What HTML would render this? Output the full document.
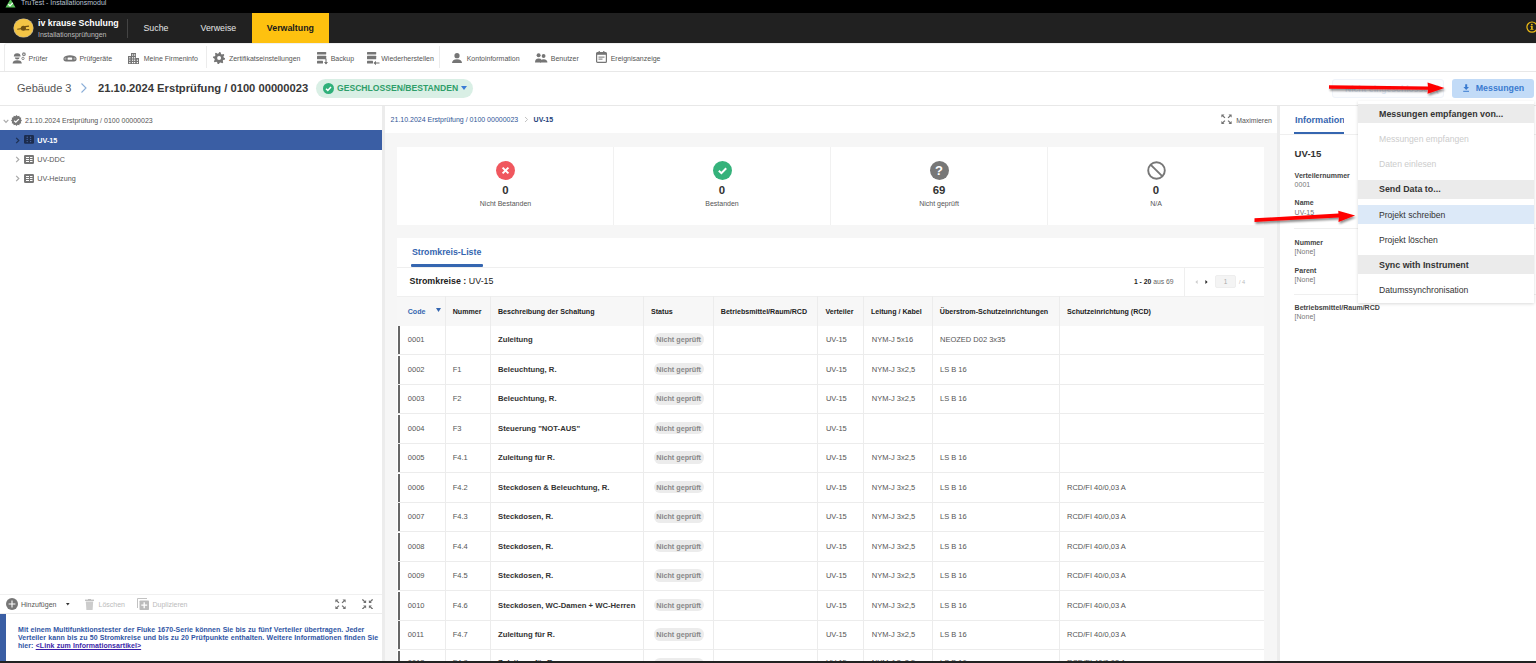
<!DOCTYPE html>
<html><head><meta charset="utf-8">
<style>
*{box-sizing:border-box;margin:0;padding:0}
html,body{width:1536px;height:663px;overflow:hidden;background:#fff}
body{position:relative;font-family:"Liberation Sans",sans-serif;color:#333}
.a{position:absolute}
.t{position:absolute;white-space:nowrap;line-height:1}
.b{font-weight:bold}
</style></head><body>
<div class="a" style="left:0px;top:0px;width:1536px;height:13px;background:#000;"></div>
<svg class="a" style="left:5px;top:0px" width="11" height="9" viewBox="0 0 11 9"><path d="M5.5 -1 L10.5 7.5 L0.5 7.5 Z" fill="#5cc25c"/><path d="M3.3 4.2 L5 5.8 L7.8 2.8" stroke="#fff" stroke-width="1.2" fill="none"/></svg>
<div class="t" style="left:21.00px;top:-0.63px;font-size:7px;color:#b8c2d2;">TruTest - Installationsmodul</div>
<div class="a" style="left:0px;top:13px;width:1536px;height:30px;background:#212121;"></div>
<div class="a" style="left:14.1px;top:18.9px;width:18.5px;height:18.5px;background:#f3c445;border-radius:50%;box-shadow:0 0 0 0.6px rgba(255,240,200,0.7)"></div>
<svg class="a" style="left:16px;top:22px" width="15" height="12" viewBox="0 0 15 12"><path d="M1.2 7.2 L5.5 6.6" stroke="#7a5a16" stroke-width="1.1"/><ellipse cx="7.4" cy="6.3" rx="2.6" ry="2.5" fill="#6e4f12"/><path d="M9 4.6 L13 4.1 M9.3 7.8 L13.2 7.6" stroke="#6e4f12" stroke-width="1.1"/></svg>
<div class="t" style="left:38.00px;top:18.55px;font-size:8.8px;color:#fff;font-weight:bold;">iv krause Schulung</div>
<div class="t" style="left:38.00px;top:30.97px;font-size:7px;color:#bbb;">Installationsprüfungen</div>
<div class="a" style="left:127px;top:18.5px;width:1px;height:19px;background:#444;"></div>
<div class="t" style="left:143.50px;top:23.65px;font-size:8.8px;color:#e6e6e6;">Suche</div>
<div class="t" style="left:200.50px;top:23.65px;font-size:8.8px;color:#e6e6e6;">Verweise</div>
<div class="a" style="left:252px;top:13px;width:77px;height:30px;background:#fec10f;"></div>
<div class="t" style="left:266.80px;top:23.81px;font-size:8.85px;color:#1a1a1a;font-weight:bold;">Verwaltung</div>
<svg class="a" style="left:1526px;top:21px" width="12" height="12" viewBox="0 0 12 12"><circle cx="6" cy="6.1" r="5.1" fill="none" stroke="#f0bd14" stroke-width="1.2"/><circle cx="5.8" cy="3.6" r="0.95" fill="#f0bd14"/><path d="M4.4 5 H6.7 V7.9 H7.5 V8.8 H4.3 V7.9 H5.1 V5.8 H4.4Z" fill="#f0bd14"/></svg>
<div class="a" style="left:4.3px;top:42.6px;width:1532px;height:29.5px;background:transparent;border-left:1px solid #ececec;border-top:1px solid #f0f0f0;border-top-left-radius:3px"></div>
<div class="a" style="left:0px;top:71px;width:1536px;height:1px;background:#e8e8e8;"></div>
<svg class="a" style="left:11.7px;top:52px" width="15" height="12" viewBox="0 0 15 12"><path d="M1.8 4.6 Q1.8 1.2 5.2 1.2 Q8.6 1.2 8.6 4.6 Z" fill="#757575"/><path d="M2.8 5.6 H7.6 Q7.4 7.6 5.2 7.6 Q3 7.6 2.8 5.6Z" fill="#757575"/><path d="M0.6 11.6 Q0.6 8.2 5.2 8.2 Q9.8 8.2 9.8 11.6 Z" fill="#757575"/><path d="M14.00 2.20 L13.38 2.81 L13.38 3.68 L12.51 3.68 L11.90 4.30 L11.29 3.68 L10.42 3.68 L10.42 2.81 L9.80 2.20 L10.42 1.59 L10.42 0.72 L11.29 0.72 L11.90 0.10 L12.51 0.72 L13.38 0.72 L13.38 1.59Z" fill="#757575"/><circle cx="11.9" cy="2.2" r="0.7" fill="#fff"/><circle cx="11" cy="6.4" r="1.2" fill="none" stroke="#757575" stroke-width="0.8"/></svg>
<div class="t" style="left:28.60px;top:55.47px;font-size:7.0px;color:#555;">Prüfer</div>
<svg class="a" style="left:62.6px;top:55px" width="14" height="7" viewBox="0 0 14 7"><path d="M2.8 0.9 Q7 -0.2 11.2 0.9 Q13.6 1.4 13.6 3.7 Q13.6 6.3 11 6.5 H3 Q0.4 6.3 0.4 3.7 Q0.4 1.4 2.8 0.9Z" fill="#757575"/><rect x="4.6" y="2.5" width="4.6" height="2.3" rx="0.6" fill="#fff"/><circle cx="2.4" cy="3.7" r="1.1" fill="#aaa"/><circle cx="11.6" cy="3.7" r="1.1" fill="#aaa"/></svg>
<div class="t" style="left:79.40px;top:55.47px;font-size:7.0px;color:#555;">Prüfgeräte</div>
<svg class="a" style="left:128px;top:52.5px" width="11" height="11" viewBox="0 0 11 11"><path d="M0 11 V3 H3 V0 H8 V5 H11 V11 Z" fill="#757575"/><g fill="#fff"><rect x="1.2" y="4.2" width="1.2" height="1.2"/><rect x="1.2" y="6.6" width="1.2" height="1.2"/><rect x="1.2" y="9" width="1.2" height="1.2"/><rect x="4" y="1.4" width="1.2" height="1.2"/><rect x="6" y="1.4" width="1.2" height="1.2"/><rect x="4" y="4.2" width="1.2" height="1.2"/><rect x="6" y="4.2" width="1.2" height="1.2"/><rect x="4" y="6.6" width="1.2" height="1.2"/><rect x="6" y="6.6" width="1.2" height="1.2"/><rect x="4" y="9" width="1.2" height="1.2"/><rect x="6" y="9" width="1.2" height="1.2"/><rect x="8.8" y="6.6" width="1.2" height="1.2"/><rect x="8.8" y="9" width="1.2" height="1.2"/></g></svg>
<div class="t" style="left:143.75px;top:55.47px;font-size:7.0px;color:#555;">Meine Firmeninfo</div>
<div class="a" style="left:206px;top:46px;width:1px;height:22px;background:#ececec;"></div>
<svg class="a" style="left:212.8px;top:51.9px" width="12.2" height="12.2" viewBox="0 0 12.2 12.2"><path d="M6.40 0.01 L7.58 0.18 L8.07 1.94 L8.84 2.41 L10.62 2.00 L11.33 2.96 L10.43 4.55 L10.65 5.43 L12.19 6.40 L12.02 7.58 L10.26 8.07 L9.79 8.84 L10.20 10.62 L9.24 11.33 L7.65 10.43 L6.77 10.65 L5.80 12.19 L4.62 12.02 L4.13 10.26 L3.36 9.79 L1.58 10.20 L0.87 9.24 L1.77 7.65 L1.55 6.77 L0.01 5.80 L0.18 4.62 L1.94 4.13 L2.41 3.36 L2.00 1.58 L2.96 0.87 L4.55 1.77 L5.43 1.55Z" fill="#757575"/><circle cx="6.1" cy="6.1" r="2" fill="#fff"/></svg>
<div class="t" style="left:228.90px;top:55.47px;font-size:7.0px;color:#555;">Zertifikatseinstellungen</div>
<svg class="a" style="left:316.8px;top:52.2px" width="12" height="13" viewBox="0 0 12 13"><rect x="0" y="0" width="9.2" height="2.6" rx="0.5" fill="#757575"/><rect x="0" y="3.8" width="9.2" height="3.5" rx="0.5" fill="#757575"/><rect x="0" y="8.8" width="6" height="2.6" rx="0.5" fill="#757575"/><path d="M9 6.8 V12" stroke="#757575" stroke-width="1.1"/><path d="M7 10 L9 12.4 L11 10Z" fill="#757575"/></svg>
<div class="t" style="left:330.70px;top:55.47px;font-size:7.0px;color:#555;">Backup</div>
<svg class="a" style="left:367px;top:52.2px" width="13" height="13" viewBox="0 0 13 13"><rect x="0" y="0" width="9.2" height="2.6" rx="0.5" fill="#757575"/><rect x="0" y="3.8" width="9.2" height="3.5" rx="0.5" fill="#757575"/><rect x="0" y="8.8" width="6" height="2.6" rx="0.5" fill="#757575"/><path d="M7.5 11 H12.5" stroke="#757575" stroke-width="1.1"/><path d="M9 8.8 L6.5 11 L9 13.2Z" fill="#757575"/></svg>
<div class="t" style="left:381.25px;top:55.47px;font-size:7.0px;color:#555;">Wiederherstellen</div>
<div class="a" style="left:439px;top:46px;width:1px;height:22px;background:#ececec;"></div>
<svg class="a" style="left:451.9px;top:52.5px" width="10" height="10.5" viewBox="0 0 10 10.5"><circle cx="5" cy="2.7" r="2.6" fill="#757575"/><path d="M0 10.3 Q0 6.2 5 6.2 Q10 6.2 10 10.3Z" fill="#757575"/></svg>
<div class="t" style="left:466.70px;top:55.47px;font-size:7.0px;color:#555;">Kontoinformation</div>
<svg class="a" style="left:535.2px;top:53px" width="12.5" height="10" viewBox="0 0 12.5 10"><circle cx="3.6" cy="2.2" r="2" fill="#757575"/><circle cx="8.6" cy="3" r="1.9" fill="#757575"/><path d="M0 9.6 Q0 5.6 3.6 5.6 Q6 5.6 6.6 7 L6 9.6Z" fill="#757575"/><path d="M5 9.6 Q5 6.4 8.6 6.2 Q12.4 6.4 12.4 9.6Z" fill="#757575"/></svg>
<div class="t" style="left:550.80px;top:55.47px;font-size:7.0px;color:#555;">Benutzer</div>
<svg class="a" style="left:596px;top:51.3px" width="11" height="12" viewBox="0 0 11 12"><rect x="0.6" y="1.6" width="9.8" height="9.8" rx="1" fill="none" stroke="#757575" stroke-width="1.2"/><rect x="0.6" y="1.6" width="9.8" height="2.2" fill="#757575"/><rect x="2.6" y="0" width="1.2" height="2.5" fill="#757575"/><rect x="7.2" y="0" width="1.2" height="2.5" fill="#757575"/><rect x="2.5" y="5.6" width="6" height="1" fill="#757575"/><rect x="2.5" y="7.6" width="4" height="1" fill="#757575"/></svg>
<div class="t" style="left:610.70px;top:55.47px;font-size:7.0px;color:#555;">Ereignisanzeige</div>
<div class="t" style="left:17.00px;top:82.89px;font-size:11px;color:#555;">Gebäude 3</div>
<svg class="a" style="left:80px;top:82px" width="8" height="12" viewBox="0 0 8 12"><path d="M1.5 1.5 L6 6 L1.5 10.5" stroke="#8aaed8" stroke-width="1.1" fill="none"/></svg>
<div class="t" style="left:98.00px;top:83.22px;font-size:11.2px;color:#383838;font-weight:bold;">21.10.2024 Erstprüfung / 0100 00000023</div>
<div class="a" style="left:316px;top:79px;width:157px;height:19px;background:#d9efe5;border-radius:10px"></div>
<div class="a" style="left:323px;top:82.5px;width:11px;height:11px;background:#2fb07a;border-radius:50%"></div>
<svg class="a" style="left:323px;top:82.5px" width="11" height="11" viewBox="0 0 11 11"><path d="M3 5.8 L4.8 7.4 L8 4" stroke="#fff" stroke-width="1.5" fill="none"/></svg>
<div class="t" style="left:337.00px;top:83.62px;font-size:8.6px;color:#2e9e6a;font-weight:bold;">GESCHLOSSEN/BESTANDEN</div>
<svg class="a" style="left:461px;top:86px" width="6" height="4" viewBox="0 0 6 4"><path d="M0 0 L6 0 L3 4 Z" fill="#3a7bd5"/></svg>
<div class="a" style="left:0px;top:105px;width:1536px;height:1px;background:#e8e8e8;"></div>
<div class="a" style="left:382px;top:106px;width:3px;height:555px;background:#ececec;"></div>
<div class="a" style="left:1277px;top:106px;width:3px;height:555px;background:#ececec;"></div>
<svg class="a" style="left:2.5px;top:118.8px" width="6" height="5" viewBox="0 0 6 5"><path d="M0.7 0.9 L3 3.3 L5.3 0.9" stroke="#aaa" stroke-width="1.2" fill="none"/></svg>
<svg class="a" style="left:11px;top:114.8px" width="11" height="11" viewBox="0 0 11 11"><path d="M11.00 5.50 L9.85 6.66 L10.26 8.25 L8.68 8.68 L8.25 10.26 L6.66 9.85 L5.50 11.00 L4.34 9.85 L2.75 10.26 L2.32 8.68 L0.74 8.25 L1.15 6.66 L0.00 5.50 L1.15 4.34 L0.74 2.75 L2.32 2.32 L2.75 0.74 L4.34 1.15 L5.50 0.00 L6.66 1.15 L8.25 0.74 L8.68 2.32 L10.26 2.75 L9.85 4.34Z" fill="#777"/><path d="M3.2 5.7 L4.8 7.2 L7.8 4.1" stroke="#fff" stroke-width="1.3" fill="none"/></svg>
<div class="t" style="left:25.00px;top:117.17px;font-size:7px;color:#555;">21.10.2024 Erstprüfung / 0100 00000023</div>
<div class="a" style="left:0px;top:130.3px;width:382px;height:19.5px;background:#3a5ea4;"></div>
<svg class="a" style="left:15px;top:136.5px" width="5" height="7" viewBox="0 0 5 7"><path d="M1.2 0.9 L3.8 3.5 L1.2 6.1" stroke="#1f3152" stroke-width="1.2" fill="none"/></svg>
<svg class="a" style="left:23.7px;top:135.4px" width="10" height="9" viewBox="0 0 10 9"><rect x="0" y="0" width="10" height="8.8" rx="1.2" fill="#1c2c4e"/><g fill="#4a68a6"><circle cx="3.2" cy="2.2" r="0.7"/><circle cx="3.2" cy="4.4" r="0.7"/><circle cx="3.2" cy="6.6" r="0.7"/><circle cx="6.6" cy="2.2" r="0.7"/><circle cx="6.6" cy="4.4" r="0.7"/><circle cx="6.6" cy="6.6" r="0.7"/></g></svg>
<div class="t" style="left:37.30px;top:136.71px;font-size:7.2px;color:#fff;font-weight:bold;">UV-15</div>
<svg class="a" style="left:15px;top:155.8px" width="5" height="7" viewBox="0 0 5 7"><path d="M1.2 0.9 L3.8 3.5 L1.2 6.1" stroke="#aaa" stroke-width="1.2" fill="none"/></svg>
<svg class="a" style="left:24px;top:155px" width="10" height="9" viewBox="0 0 10 9"><rect x="0" y="0" width="10" height="9" rx="1.2" fill="#777"/><g fill="#fff"><rect x="2" y="2" width="3" height="1"/><rect x="6" y="2" width="2.5" height="1"/><rect x="2" y="4" width="3" height="1"/><rect x="6" y="4" width="2.5" height="1"/><rect x="2" y="6" width="3" height="1"/><rect x="6" y="6" width="2.5" height="1"/></g></svg>
<div class="t" style="left:37.30px;top:155.71px;font-size:7.2px;color:#555;">UV-DDC</div>
<svg class="a" style="left:15px;top:175.2px" width="5" height="7" viewBox="0 0 5 7"><path d="M1.2 0.9 L3.8 3.5 L1.2 6.1" stroke="#aaa" stroke-width="1.2" fill="none"/></svg>
<svg class="a" style="left:24px;top:174px" width="10" height="9" viewBox="0 0 10 9"><rect x="0" y="0" width="10" height="9" rx="1.2" fill="#777"/><g fill="#fff"><rect x="2" y="2" width="3" height="1"/><rect x="6" y="2" width="2.5" height="1"/><rect x="2" y="4" width="3" height="1"/><rect x="6" y="4" width="2.5" height="1"/><rect x="2" y="6" width="3" height="1"/><rect x="6" y="6" width="2.5" height="1"/></g></svg>
<div class="t" style="left:37.30px;top:175.21px;font-size:7.2px;color:#555;">UV-Heizung</div>
<div class="a" style="left:0px;top:594px;width:382px;height:1px;background:#f0f0f0;"></div>
<div class="a" style="left:5.5px;top:598px;width:12px;height:12px;background:#777;border-radius:50%"></div>
<svg class="a" style="left:5.5px;top:598px" width="12" height="12" viewBox="0 0 12 12"><path d="M6 2.6 V9.4 M2.6 6 H9.4" stroke="#fff" stroke-width="1.1"/></svg>
<div class="t" style="left:21.00px;top:600.57px;font-size:7px;color:#555;">Hinzufügen</div>
<svg class="a" style="left:65.8px;top:602.9px" width="4" height="3" viewBox="0 0 4 3"><path d="M0 0 H3.6 L1.8 2.6Z" fill="#333"/></svg>
<svg class="a" style="left:85px;top:598.5px" width="9" height="11" viewBox="0 0 9 11"><rect x="0" y="0.6" width="9" height="1.3" fill="#bbb"/><rect x="3" y="0" width="3" height="1" fill="#bbb"/><path d="M0.8 2.5 H8.2 L7.6 11 H1.4Z" fill="#ccc"/></svg>
<div class="t" style="left:98.50px;top:600.57px;font-size:7px;color:#bbb;">Löschen</div>
<svg class="a" style="left:137px;top:598px" width="12" height="12" viewBox="0 0 12 12"><path d="M0.5 10 V0.5 H10" stroke="#bbb" stroke-width="0.9" fill="none"/><rect x="2.5" y="2.5" width="9.5" height="9.5" rx="0.8" fill="#bbb"/><path d="M7.2 4.3 V10.2 M4.3 7.2 H10.2" stroke="#fff" stroke-width="1.3"/></svg>
<div class="t" style="left:152.50px;top:600.57px;font-size:7px;color:#bbb;">Duplizieren</div>
<svg class="a" style="left:335.3px;top:598.6px" width="11" height="10.5" viewBox="0 0 11 10.5"><path d="M0.40 0.40 L3.50 0.40 L0.40 3.50Z" fill="#6f6f6f"/><path d="M1.60 1.60 L3.90 3.90" stroke="#6f6f6f" stroke-width="1.3"/><path d="M10.60 0.40 L7.50 0.40 L10.60 3.50Z" fill="#6f6f6f"/><path d="M9.40 1.60 L7.10 3.90" stroke="#6f6f6f" stroke-width="1.3"/><path d="M0.40 10.10 L3.50 10.10 L0.40 7.00Z" fill="#6f6f6f"/><path d="M1.60 8.90 L3.90 6.60" stroke="#6f6f6f" stroke-width="1.3"/><path d="M10.60 10.10 L7.50 10.10 L10.60 7.00Z" fill="#6f6f6f"/><path d="M9.40 8.90 L7.10 6.60" stroke="#6f6f6f" stroke-width="1.3"/></svg>
<svg class="a" style="left:362px;top:598.6px" width="11" height="10.5" viewBox="0 0 11 10.5"><path d="M4.10 4.10 L1.10 4.10 L4.10 1.10Z" fill="#6f6f6f"/><path d="M0.40 0.40 L2.90 2.90" stroke="#6f6f6f" stroke-width="1.3"/><path d="M6.90 4.10 L9.90 4.10 L6.90 1.10Z" fill="#6f6f6f"/><path d="M10.60 0.40 L8.10 2.90" stroke="#6f6f6f" stroke-width="1.3"/><path d="M4.10 6.40 L1.10 6.40 L4.10 9.40Z" fill="#6f6f6f"/><path d="M0.40 10.10 L2.90 7.60" stroke="#6f6f6f" stroke-width="1.3"/><path d="M6.90 6.40 L9.90 6.40 L6.90 9.40Z" fill="#6f6f6f"/><path d="M10.60 10.10 L8.10 7.60" stroke="#6f6f6f" stroke-width="1.3"/></svg>
<div class="a" style="left:0px;top:613px;width:382px;height:1px;background:#ececec;"></div>
<div class="a" style="left:0px;top:614px;width:6px;height:47px;background:#3a5ea4;"></div>
<div class="a b" style="left:18px;top:626px;width:362px;font-size:7px;line-height:7.8px;color:#2f55a4;letter-spacing:0.05px;word-spacing:0.25px">Mit einem Multifunktionstester der Fluke 1670-Serie können Sie bis zu fünf Verteiler übertragen. Jeder Verteiler kann bis zu 50 Stromkreise und bis zu 20 Prüfpunkte enthalten. Weitere Informationen finden Sie hier: <span style="color:#3b1fa8;text-decoration:underline">&lt;Link zum Informationsartikel&gt;</span></div>
<div class="a" style="left:385px;top:106px;width:892px;height:26.5px;background:#fff;"></div>
<div class="a" style="left:385px;top:132.5px;width:892px;height:528.5px;background:#f6f6f6;"></div>
<div class="t" style="left:390.60px;top:115.97px;font-size:7px;color:#2f5596;">21.10.2024 Erstprüfung / 0100 00000023</div>
<svg class="a" style="left:524px;top:116px" width="5" height="7" viewBox="0 0 5 7"><path d="M1 1 L3.6 3.5 L1 6" stroke="#bbb" stroke-width="0.9" fill="none"/></svg>
<div class="t" style="left:533.60px;top:115.97px;font-size:7px;color:#24417a;font-weight:bold;">UV-15</div>
<svg class="a" style="left:1221px;top:114px" width="11" height="10.5" viewBox="0 0 11 10.5"><path d="M0.40 0.40 L3.50 0.40 L0.40 3.50Z" fill="#6f6f6f"/><path d="M1.60 1.60 L3.90 3.90" stroke="#6f6f6f" stroke-width="1.3"/><path d="M10.60 0.40 L7.50 0.40 L10.60 3.50Z" fill="#6f6f6f"/><path d="M9.40 1.60 L7.10 3.90" stroke="#6f6f6f" stroke-width="1.3"/><path d="M0.40 10.10 L3.50 10.10 L0.40 7.00Z" fill="#6f6f6f"/><path d="M1.60 8.90 L3.90 6.60" stroke="#6f6f6f" stroke-width="1.3"/><path d="M10.60 10.10 L7.50 10.10 L10.60 7.00Z" fill="#6f6f6f"/><path d="M9.40 8.90 L7.10 6.60" stroke="#6f6f6f" stroke-width="1.3"/></svg>
<div class="t" style="left:1236.20px;top:117.66px;font-size:6.9px;color:#555;">Maximieren</div>
<div class="a" style="left:397px;top:146.5px;width:867px;height:78.5px;background:#fff;"></div>
<div class="a" style="left:613px;top:146.5px;width:1px;height:78.5px;background:#f1f1f1;"></div>
<div class="a" style="left:830px;top:146.5px;width:1px;height:78.5px;background:#f1f1f1;"></div>
<div class="a" style="left:1047px;top:146.5px;width:1px;height:78.5px;background:#f1f1f1;"></div>
<svg class="a" style="left:496.0px;top:160.5px" width="19" height="19" viewBox="0 0 19 19"><circle cx="9.5" cy="9.5" r="9.5" fill="#f0575e"/><path d="M6.6 6.6 L12.4 12.4 M12.4 6.6 L6.6 12.4" stroke="#fff" stroke-width="2"/></svg>
<div class="t" style="left:405.50px;top:185.25px;font-size:11.4px;color:#333;font-weight:bold;width:200px;text-align:center">0</div>
<div class="t" style="left:405.50px;top:199.97px;font-size:7px;color:#555;width:200px;text-align:center">Nicht Bestanden</div>
<svg class="a" style="left:712.5px;top:160.5px" width="19" height="19" viewBox="0 0 19 19"><circle cx="9.5" cy="9.5" r="9.5" fill="#35b27b"/><path d="M5.8 9.8 L8.4 12.2 L13.2 7.2" stroke="#fff" stroke-width="2" fill="none"/></svg>
<div class="t" style="left:622.00px;top:185.25px;font-size:11.4px;color:#333;font-weight:bold;width:200px;text-align:center">0</div>
<div class="t" style="left:622.00px;top:199.97px;font-size:7px;color:#555;width:200px;text-align:center">Bestanden</div>
<svg class="a" style="left:929.5px;top:160.5px" width="19" height="19" viewBox="0 0 19 19"><circle cx="9.5" cy="9.5" r="9.5" fill="#777"/></svg>
<div class="t" style="left:935.10px;top:163.90px;font-size:13px;color:#fff;font-weight:bold;">?</div>
<div class="t" style="left:839.00px;top:185.25px;font-size:11.4px;color:#333;font-weight:bold;width:200px;text-align:center">69</div>
<div class="t" style="left:839.00px;top:199.97px;font-size:7px;color:#555;width:200px;text-align:center">Nicht geprüft</div>
<svg class="a" style="left:1146.5px;top:160.5px" width="19" height="19" viewBox="0 0 19 19"><circle cx="9.5" cy="9.5" r="8.3" fill="none" stroke="#777" stroke-width="1.9"/><path d="M3.8 3.8 L15.2 15.2" stroke="#777" stroke-width="1.9"/></svg>
<div class="t" style="left:1056.00px;top:185.25px;font-size:11.4px;color:#333;font-weight:bold;width:200px;text-align:center">0</div>
<div class="t" style="left:1056.00px;top:199.97px;font-size:7px;color:#555;width:200px;text-align:center">N/A</div>
<div class="a" style="left:397px;top:238px;width:867px;height:423px;background:#fff;"></div>
<div class="t" style="left:411.90px;top:248.25px;font-size:8.8px;color:#3566b0;font-weight:bold;">Stromkreis-Liste</div>
<div class="a" style="left:410.7px;top:264px;width:72.6px;height:2.5px;background:#3566b0;border-radius:1px"></div>
<div class="a" style="left:397px;top:266.5px;width:867px;height:1px;background:#efefef;"></div>
<div class="t" style="left:409.60px;top:276.87px;font-size:8.9px;color:#222;"><b>Stromkreise :</b> UV-15</div>
<div class="t" style="left:1133.90px;top:279.44px;font-size:6.8px;color:#666;"><b style="color:#222">1 - 20</b> aus 69</div>
<div class="a" style="left:1184px;top:267.5px;width:1px;height:28.5px;background:#efefef;"></div>
<svg class="a" style="left:1194.5px;top:279.7px" width="3" height="4" viewBox="0 0 3 4"><path d="M2.6 0 L0.4 2 L2.6 4Z" fill="#ccc"/></svg>
<svg class="a" style="left:1204.5px;top:279.7px" width="3" height="4" viewBox="0 0 3 4"><path d="M0.4 0 L2.6 2 L0.4 4Z" fill="#222"/></svg>
<div class="a" style="left:1215.3px;top:274.5px;width:21px;height:13.5px;background:#f4f4f4;border:1px solid #eee;border-radius:2px"></div>
<div class="t" style="left:1223.80px;top:279.30px;font-size:6.5px;color:#aaa;">1</div>
<div class="t" style="left:1239.00px;top:279.56px;font-size:5.6px;color:#bbb;">/ 4</div>
<div class="a" style="left:397px;top:296px;width:867px;height:29.5px;background:#f7f7f7;border-top:1px solid #efefef"></div>
<div class="a" style="left:445px;top:296px;width:1px;height:365px;background:#ececec;"></div>
<div class="a" style="left:490px;top:296px;width:1px;height:365px;background:#ececec;"></div>
<div class="a" style="left:643px;top:296px;width:1px;height:365px;background:#ececec;"></div>
<div class="a" style="left:713px;top:296px;width:1px;height:365px;background:#ececec;"></div>
<div class="a" style="left:817px;top:296px;width:1px;height:365px;background:#ececec;"></div>
<div class="a" style="left:863px;top:296px;width:1px;height:365px;background:#ececec;"></div>
<div class="a" style="left:932px;top:296px;width:1px;height:365px;background:#ececec;"></div>
<div class="a" style="left:1059px;top:296px;width:1px;height:365px;background:#ececec;"></div>
<div class="t" style="left:407.70px;top:308.59px;font-size:7.1px;color:#3566b0;font-weight:bold;">Code</div>
<div class="t" style="left:452.70px;top:308.59px;font-size:7.1px;color:#222;font-weight:bold;">Nummer</div>
<div class="t" style="left:497.90px;top:308.59px;font-size:7.1px;color:#222;font-weight:bold;">Beschreibung der Schaltung</div>
<div class="t" style="left:651.00px;top:308.59px;font-size:7.1px;color:#222;font-weight:bold;">Status</div>
<div class="t" style="left:720.80px;top:308.59px;font-size:7.1px;color:#222;font-weight:bold;">Betriebsmittel/Raum/RCD</div>
<div class="t" style="left:825.40px;top:308.59px;font-size:7.1px;color:#222;font-weight:bold;">Verteiler</div>
<div class="t" style="left:870.90px;top:308.59px;font-size:7.1px;color:#222;font-weight:bold;">Leitung / Kabel</div>
<div class="t" style="left:939.80px;top:308.59px;font-size:7.1px;color:#222;font-weight:bold;">Überstrom-Schutzeinrichtungen</div>
<div class="t" style="left:1067.00px;top:308.59px;font-size:7.1px;color:#222;font-weight:bold;">Schutzeinrichtung (RCD)</div>
<svg class="a" style="left:435.9px;top:308px" width="5" height="4" viewBox="0 0 5 4"><path d="M0 0 H5 L2.5 4Z" fill="#3566b0"/></svg>
<div class="a" style="left:397px;top:354.0px;width:867px;height:1px;background:#ececec;"></div>
<div class="a" style="left:398px;top:326.0px;width:2.4px;height:28px;background:#666;"></div>
<div class="t" style="left:407.80px;top:336.35px;font-size:7.5px;color:#555;">0001</div>
<div class="t" style="left:452.70px;top:336.35px;font-size:7.5px;color:#555;"></div>
<div class="t" style="left:498.00px;top:336.18px;font-size:7.7px;color:#333;font-weight:bold;">Zuleitung</div>
<div class="a" style="left:654px;top:333.3px;width:50px;height:12.6px;background:#ececec;border-radius:6.3px"></div>
<div class="t" style="left:656.30px;top:336.01px;font-size:7.2px;color:#888;font-weight:bold;">Nicht geprüft</div>
<div class="t" style="left:825.90px;top:336.35px;font-size:7.5px;color:#555;">UV-15</div>
<div class="t" style="left:871.80px;top:336.35px;font-size:7.5px;color:#555;">NYM-J 5x16</div>
<div class="t" style="left:940.00px;top:336.35px;font-size:7.5px;color:#555;">NEOZED D02 3x35</div>
<div class="t" style="left:1067.00px;top:336.35px;font-size:7.5px;color:#555;"></div>
<div class="a" style="left:397px;top:383.5px;width:867px;height:1px;background:#ececec;"></div>
<div class="a" style="left:398px;top:355.5px;width:2.4px;height:28px;background:#666;"></div>
<div class="t" style="left:407.80px;top:365.85px;font-size:7.5px;color:#555;">0002</div>
<div class="t" style="left:452.70px;top:365.85px;font-size:7.5px;color:#555;">F1</div>
<div class="t" style="left:498.00px;top:365.68px;font-size:7.7px;color:#333;font-weight:bold;">Beleuchtung, R.</div>
<div class="a" style="left:654px;top:362.8px;width:50px;height:12.6px;background:#ececec;border-radius:6.3px"></div>
<div class="t" style="left:656.30px;top:365.51px;font-size:7.2px;color:#888;font-weight:bold;">Nicht geprüft</div>
<div class="t" style="left:825.90px;top:365.85px;font-size:7.5px;color:#555;">UV-15</div>
<div class="t" style="left:871.80px;top:365.85px;font-size:7.5px;color:#555;">NYM-J 3x2,5</div>
<div class="t" style="left:940.00px;top:365.85px;font-size:7.5px;color:#555;">LS B 16</div>
<div class="t" style="left:1067.00px;top:365.85px;font-size:7.5px;color:#555;"></div>
<div class="a" style="left:397px;top:413.0px;width:867px;height:1px;background:#ececec;"></div>
<div class="a" style="left:398px;top:385.0px;width:2.4px;height:28px;background:#666;"></div>
<div class="t" style="left:407.80px;top:395.35px;font-size:7.5px;color:#555;">0003</div>
<div class="t" style="left:452.70px;top:395.35px;font-size:7.5px;color:#555;">F2</div>
<div class="t" style="left:498.00px;top:395.18px;font-size:7.7px;color:#333;font-weight:bold;">Beleuchtung, R.</div>
<div class="a" style="left:654px;top:392.3px;width:50px;height:12.6px;background:#ececec;border-radius:6.3px"></div>
<div class="t" style="left:656.30px;top:395.01px;font-size:7.2px;color:#888;font-weight:bold;">Nicht geprüft</div>
<div class="t" style="left:825.90px;top:395.35px;font-size:7.5px;color:#555;">UV-15</div>
<div class="t" style="left:871.80px;top:395.35px;font-size:7.5px;color:#555;">NYM-J 3x2,5</div>
<div class="t" style="left:940.00px;top:395.35px;font-size:7.5px;color:#555;">LS B 16</div>
<div class="t" style="left:1067.00px;top:395.35px;font-size:7.5px;color:#555;"></div>
<div class="a" style="left:397px;top:442.5px;width:867px;height:1px;background:#ececec;"></div>
<div class="a" style="left:398px;top:414.5px;width:2.4px;height:28px;background:#666;"></div>
<div class="t" style="left:407.80px;top:424.85px;font-size:7.5px;color:#555;">0004</div>
<div class="t" style="left:452.70px;top:424.85px;font-size:7.5px;color:#555;">F3</div>
<div class="t" style="left:498.00px;top:424.68px;font-size:7.7px;color:#333;font-weight:bold;">Steuerung "NOT-AUS"</div>
<div class="a" style="left:654px;top:421.8px;width:50px;height:12.6px;background:#ececec;border-radius:6.3px"></div>
<div class="t" style="left:656.30px;top:424.51px;font-size:7.2px;color:#888;font-weight:bold;">Nicht geprüft</div>
<div class="t" style="left:825.90px;top:424.85px;font-size:7.5px;color:#555;">UV-15</div>
<div class="t" style="left:871.80px;top:424.85px;font-size:7.5px;color:#555;"></div>
<div class="t" style="left:940.00px;top:424.85px;font-size:7.5px;color:#555;"></div>
<div class="t" style="left:1067.00px;top:424.85px;font-size:7.5px;color:#555;"></div>
<div class="a" style="left:397px;top:472.0px;width:867px;height:1px;background:#ececec;"></div>
<div class="a" style="left:398px;top:444.0px;width:2.4px;height:28px;background:#666;"></div>
<div class="t" style="left:407.80px;top:454.35px;font-size:7.5px;color:#555;">0005</div>
<div class="t" style="left:452.70px;top:454.35px;font-size:7.5px;color:#555;">F4.1</div>
<div class="t" style="left:498.00px;top:454.18px;font-size:7.7px;color:#333;font-weight:bold;">Zuleitung für R.</div>
<div class="a" style="left:654px;top:451.3px;width:50px;height:12.6px;background:#ececec;border-radius:6.3px"></div>
<div class="t" style="left:656.30px;top:454.01px;font-size:7.2px;color:#888;font-weight:bold;">Nicht geprüft</div>
<div class="t" style="left:825.90px;top:454.35px;font-size:7.5px;color:#555;">UV-15</div>
<div class="t" style="left:871.80px;top:454.35px;font-size:7.5px;color:#555;">NYM-J 3x2,5</div>
<div class="t" style="left:940.00px;top:454.35px;font-size:7.5px;color:#555;">LS B 16</div>
<div class="t" style="left:1067.00px;top:454.35px;font-size:7.5px;color:#555;"></div>
<div class="a" style="left:397px;top:501.5px;width:867px;height:1px;background:#ececec;"></div>
<div class="a" style="left:398px;top:473.5px;width:2.4px;height:28px;background:#666;"></div>
<div class="t" style="left:407.80px;top:483.85px;font-size:7.5px;color:#555;">0006</div>
<div class="t" style="left:452.70px;top:483.85px;font-size:7.5px;color:#555;">F4.2</div>
<div class="t" style="left:498.00px;top:483.68px;font-size:7.7px;color:#333;font-weight:bold;">Steckdosen &amp; Beleuchtung, R.</div>
<div class="a" style="left:654px;top:480.8px;width:50px;height:12.6px;background:#ececec;border-radius:6.3px"></div>
<div class="t" style="left:656.30px;top:483.51px;font-size:7.2px;color:#888;font-weight:bold;">Nicht geprüft</div>
<div class="t" style="left:825.90px;top:483.85px;font-size:7.5px;color:#555;">UV-15</div>
<div class="t" style="left:871.80px;top:483.85px;font-size:7.5px;color:#555;">NYM-J 3x2,5</div>
<div class="t" style="left:940.00px;top:483.85px;font-size:7.5px;color:#555;">LS B 16</div>
<div class="t" style="left:1067.00px;top:483.85px;font-size:7.5px;color:#555;">RCD/FI 40/0,03 A</div>
<div class="a" style="left:397px;top:531.0px;width:867px;height:1px;background:#ececec;"></div>
<div class="a" style="left:398px;top:503.0px;width:2.4px;height:28px;background:#666;"></div>
<div class="t" style="left:407.80px;top:513.35px;font-size:7.5px;color:#555;">0007</div>
<div class="t" style="left:452.70px;top:513.35px;font-size:7.5px;color:#555;">F4.3</div>
<div class="t" style="left:498.00px;top:513.18px;font-size:7.7px;color:#333;font-weight:bold;">Steckdosen, R.</div>
<div class="a" style="left:654px;top:510.3px;width:50px;height:12.6px;background:#ececec;border-radius:6.3px"></div>
<div class="t" style="left:656.30px;top:513.01px;font-size:7.2px;color:#888;font-weight:bold;">Nicht geprüft</div>
<div class="t" style="left:825.90px;top:513.35px;font-size:7.5px;color:#555;">UV-15</div>
<div class="t" style="left:871.80px;top:513.35px;font-size:7.5px;color:#555;">NYM-J 3x2,5</div>
<div class="t" style="left:940.00px;top:513.35px;font-size:7.5px;color:#555;">LS B 16</div>
<div class="t" style="left:1067.00px;top:513.35px;font-size:7.5px;color:#555;">RCD/FI 40/0,03 A</div>
<div class="a" style="left:397px;top:560.5px;width:867px;height:1px;background:#ececec;"></div>
<div class="a" style="left:398px;top:532.5px;width:2.4px;height:28px;background:#666;"></div>
<div class="t" style="left:407.80px;top:542.85px;font-size:7.5px;color:#555;">0008</div>
<div class="t" style="left:452.70px;top:542.85px;font-size:7.5px;color:#555;">F4.4</div>
<div class="t" style="left:498.00px;top:542.68px;font-size:7.7px;color:#333;font-weight:bold;">Steckdosen, R.</div>
<div class="a" style="left:654px;top:539.8px;width:50px;height:12.6px;background:#ececec;border-radius:6.3px"></div>
<div class="t" style="left:656.30px;top:542.51px;font-size:7.2px;color:#888;font-weight:bold;">Nicht geprüft</div>
<div class="t" style="left:825.90px;top:542.85px;font-size:7.5px;color:#555;">UV-15</div>
<div class="t" style="left:871.80px;top:542.85px;font-size:7.5px;color:#555;">NYM-J 3x2,5</div>
<div class="t" style="left:940.00px;top:542.85px;font-size:7.5px;color:#555;">LS B 16</div>
<div class="t" style="left:1067.00px;top:542.85px;font-size:7.5px;color:#555;">RCD/FI 40/0,03 A</div>
<div class="a" style="left:397px;top:590.0px;width:867px;height:1px;background:#ececec;"></div>
<div class="a" style="left:398px;top:562.0px;width:2.4px;height:28px;background:#666;"></div>
<div class="t" style="left:407.80px;top:572.35px;font-size:7.5px;color:#555;">0009</div>
<div class="t" style="left:452.70px;top:572.35px;font-size:7.5px;color:#555;">F4.5</div>
<div class="t" style="left:498.00px;top:572.18px;font-size:7.7px;color:#333;font-weight:bold;">Steckdosen, R.</div>
<div class="a" style="left:654px;top:569.3px;width:50px;height:12.6px;background:#ececec;border-radius:6.3px"></div>
<div class="t" style="left:656.30px;top:572.01px;font-size:7.2px;color:#888;font-weight:bold;">Nicht geprüft</div>
<div class="t" style="left:825.90px;top:572.35px;font-size:7.5px;color:#555;">UV-15</div>
<div class="t" style="left:871.80px;top:572.35px;font-size:7.5px;color:#555;">NYM-J 3x2,5</div>
<div class="t" style="left:940.00px;top:572.35px;font-size:7.5px;color:#555;">LS B 16</div>
<div class="t" style="left:1067.00px;top:572.35px;font-size:7.5px;color:#555;">RCD/FI 40/0,03 A</div>
<div class="a" style="left:397px;top:619.5px;width:867px;height:1px;background:#ececec;"></div>
<div class="a" style="left:398px;top:591.5px;width:2.4px;height:28px;background:#666;"></div>
<div class="t" style="left:407.80px;top:601.85px;font-size:7.5px;color:#555;">0010</div>
<div class="t" style="left:452.70px;top:601.85px;font-size:7.5px;color:#555;">F4.6</div>
<div class="t" style="left:498.00px;top:601.68px;font-size:7.7px;color:#333;font-weight:bold;">Steckdosen, WC-Damen + WC-Herren</div>
<div class="a" style="left:654px;top:598.8px;width:50px;height:12.6px;background:#ececec;border-radius:6.3px"></div>
<div class="t" style="left:656.30px;top:601.51px;font-size:7.2px;color:#888;font-weight:bold;">Nicht geprüft</div>
<div class="t" style="left:825.90px;top:601.85px;font-size:7.5px;color:#555;">UV-15</div>
<div class="t" style="left:871.80px;top:601.85px;font-size:7.5px;color:#555;">NYM-J 3x2,5</div>
<div class="t" style="left:940.00px;top:601.85px;font-size:7.5px;color:#555;">LS B 16</div>
<div class="t" style="left:1067.00px;top:601.85px;font-size:7.5px;color:#555;">RCD/FI 40/0,03 A</div>
<div class="a" style="left:397px;top:649.0px;width:867px;height:1px;background:#ececec;"></div>
<div class="a" style="left:398px;top:621.0px;width:2.4px;height:28px;background:#666;"></div>
<div class="t" style="left:407.80px;top:631.35px;font-size:7.5px;color:#555;">0011</div>
<div class="t" style="left:452.70px;top:631.35px;font-size:7.5px;color:#555;">F4.7</div>
<div class="t" style="left:498.00px;top:631.18px;font-size:7.7px;color:#333;font-weight:bold;">Zuleitung für R.</div>
<div class="a" style="left:654px;top:628.3px;width:50px;height:12.6px;background:#ececec;border-radius:6.3px"></div>
<div class="t" style="left:656.30px;top:631.01px;font-size:7.2px;color:#888;font-weight:bold;">Nicht geprüft</div>
<div class="t" style="left:825.90px;top:631.35px;font-size:7.5px;color:#555;">UV-15</div>
<div class="t" style="left:871.80px;top:631.35px;font-size:7.5px;color:#555;">NYM-J 3x2,5</div>
<div class="t" style="left:940.00px;top:631.35px;font-size:7.5px;color:#555;">LS B 16</div>
<div class="t" style="left:1067.00px;top:631.35px;font-size:7.5px;color:#555;">RCD/FI 40/0,03 A</div>
<div class="a" style="left:397px;top:678.5px;width:867px;height:1px;background:#ececec;"></div>
<div class="a" style="left:398px;top:650.5px;width:2.4px;height:28px;background:#666;"></div>
<div class="t" style="left:407.80px;top:658.85px;font-size:7.5px;color:#555;">0012</div>
<div class="t" style="left:452.70px;top:658.85px;font-size:7.5px;color:#555;">F4.8</div>
<div class="t" style="left:498.00px;top:658.68px;font-size:7.7px;color:#333;font-weight:bold;">Zuleitung für R.</div>
<div class="a" style="left:654px;top:657.8px;width:50px;height:12.6px;background:#ececec;border-radius:6.3px"></div>
<div class="t" style="left:656.30px;top:660.51px;font-size:7.2px;color:#888;font-weight:bold;">Nicht geprüft</div>
<div class="t" style="left:825.90px;top:658.85px;font-size:7.5px;color:#555;">UV-15</div>
<div class="t" style="left:871.80px;top:658.85px;font-size:7.5px;color:#555;">NYM-J 3x2,5</div>
<div class="t" style="left:940.00px;top:658.85px;font-size:7.5px;color:#555;">LS B 16</div>
<div class="t" style="left:1067.00px;top:658.85px;font-size:7.5px;color:#555;">RCD/FI 40/0,03 A</div>
<div class="t b" style="left:1294.9px;top:114.6px;font-size:9.1px;color:#3566b0;width:49.2px;overflow:hidden;line-height:1.2">Information</div>
<div class="a" style="left:1294px;top:131.7px;width:49.5px;height:2.4px;background:#3566b0;"></div>
<div class="a" style="left:1280px;top:134.2px;width:256px;height:1px;background:#efefef;"></div>
<div class="t" style="left:1294.60px;top:149.47px;font-size:9.6px;color:#333;font-weight:bold;">UV-15</div>
<div class="t" style="left:1294.60px;top:171.77px;font-size:7px;color:#444;font-weight:bold;">Verteilernummer</div>
<div class="t" style="left:1294.60px;top:180.77px;font-size:7px;color:#777;">0001</div>
<div class="t" style="left:1294.60px;top:198.77px;font-size:7px;color:#444;font-weight:bold;">Name</div>
<div class="t" style="left:1294.60px;top:208.57px;font-size:7px;color:#777;">UV-15</div>
<div class="a" style="left:1294px;top:228.4px;width:242px;height:1px;background:#efefef;"></div>
<div class="t" style="left:1294.60px;top:239.47px;font-size:7px;color:#444;font-weight:bold;">Nummer</div>
<div class="t" style="left:1294.60px;top:248.47px;font-size:7px;color:#777;">[None]</div>
<div class="t" style="left:1294.60px;top:266.57px;font-size:7px;color:#444;font-weight:bold;">Parent</div>
<div class="t" style="left:1294.60px;top:275.67px;font-size:7px;color:#777;">[None]</div>
<div class="a" style="left:1294px;top:293.6px;width:242px;height:1px;background:#efefef;"></div>
<div class="t" style="left:1294.60px;top:304.27px;font-size:7px;color:#444;font-weight:bold;">Betriebsmittel/Raum/RCD</div>
<div class="t" style="left:1294.60px;top:313.37px;font-size:7px;color:#777;">[None]</div>
<div class="a" style="left:1332px;top:79.3px;width:111.7px;height:18.4px;background:#fbfcfe;border:1px solid #f0f4fa;border-radius:3px"></div>
<div class="t" style="left:1345.00px;top:84.72px;font-size:8.6px;color:#dbe5f2;font-weight:bold;">Nicht eingeschlossen (</div>
<div class="a" style="left:1451.5px;top:79.3px;width:82.3px;height:18.4px;background:#c2dbf7;border-radius:3px"></div>
<svg class="a" style="left:1462.8px;top:84.3px" width="6.4" height="8" viewBox="0 0 6.4 8"><path d="M2.2 0.3 H4.2 V3 H6 L3.2 6 L0.4 3 H2.2Z" fill="#3a7bd0"/><rect x="0.2" y="6.8" width="6" height="1" fill="#3a7bd0"/></svg>
<div class="t" style="left:1475.80px;top:84.05px;font-size:8.8px;color:#3a7bd0;font-weight:bold;">Messungen</div>
<div class="a" style="left:1357.5px;top:100.5px;width:176px;height:202px;background:#fff;box-shadow:0 1px 3px rgba(0,0,0,0.15)"></div>
<div class="a" style="left:1357.5px;top:104px;width:176px;height:19.3px;background:#ebebeb;"></div>
<div class="t" style="left:1379.00px;top:109.77px;font-size:8.9px;color:#333;font-weight:bold;">Messungen empfangen von...</div>
<div class="t" style="left:1379.00px;top:135.02px;font-size:8.6px;color:#ccc;">Messungen empfangen</div>
<div class="t" style="left:1379.00px;top:160.02px;font-size:8.6px;color:#ccc;">Daten einlesen</div>
<div class="a" style="left:1357.5px;top:179.5px;width:176px;height:19.3px;background:#ebebeb;"></div>
<div class="t" style="left:1379.00px;top:185.27px;font-size:8.9px;color:#333;font-weight:bold;">Send Data to...</div>
<div class="a" style="left:1357.5px;top:204.5px;width:176px;height:19.5px;background:#dce9f8;"></div>
<div class="t" style="left:1379.00px;top:210.52px;font-size:8.6px;color:#333;">Projekt schreiben</div>
<div class="t" style="left:1379.00px;top:235.52px;font-size:8.6px;color:#333;">Projekt löschen</div>
<div class="a" style="left:1357.5px;top:255px;width:176px;height:19.3px;background:#ebebeb;"></div>
<div class="t" style="left:1379.00px;top:260.77px;font-size:8.9px;color:#333;font-weight:bold;">Sync with Instrument</div>
<div class="t" style="left:1379.00px;top:286.02px;font-size:8.6px;color:#333;">Datumssynchronisation</div>
<svg class="a" style="left:0;top:0" width="1536" height="663" viewBox="0 0 1536 663">
<defs><filter id="sh" x="-10%" y="-50%" width="120%" height="200%"><feGaussianBlur in="SourceAlpha" stdDeviation="1"/><feOffset dx="1" dy="1.5"/><feComponentTransfer><feFuncA type="linear" slope="0.45"/></feComponentTransfer><feMerge><feMergeNode/><feMergeNode in="SourceGraphic"/></feMerge></filter></defs>
<g filter="url(#sh)" fill="#ff0000" stroke="none">
<path d="M1329 85.3 L1428 86.6 L1427.5 82.5 L1444.5 88 L1427.5 93.8 L1428 89.8 L1329 88.7 Z"/>
<path d="M1254.5 218.3 L1338.5 213.6 L1338.2 210.7 L1355.1 215.5 L1338.5 221.9 L1338.8 217.4 L1254.5 221.9 Z"/>
</g></svg>
<div class="a" style="left:0px;top:661px;width:1536px;height:2px;background:#222;"></div>
</body></html>
